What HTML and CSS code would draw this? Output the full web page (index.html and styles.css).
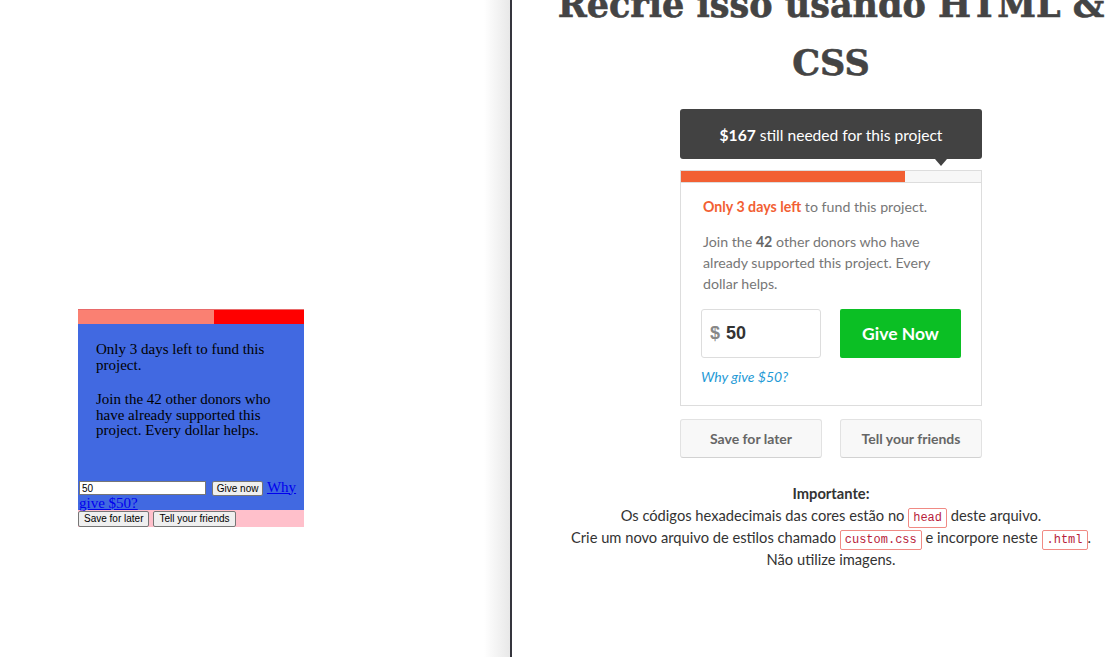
FILE: index.html
```html
<!DOCTYPE html>
<html lang="pt">
<head>
<meta charset="utf-8">
<title>Recrie isso usando HTML &amp; CSS</title>
<link rel="stylesheet" href="styles.css">
</head>
<body>
<div class="split">
  <section class="left-pane">
    <div class="widget">
      <div class="w-bar"><div class="w-fill"></div></div>
      <div class="w-body">
        <div class="w-text">
          <p>Only 3 days left to fund this project.</p>
          <p>Join the 42 other donors who have already supported this project. Every dollar helps.</p>
        </div>
        <div class="w-form"><input class="w-input" type="text" value="50"> <button class="w-btn">Give now</button> <a class="w-link" href="#">Why give $50?</a></div>
      </div>
      <div class="w-actions"><button class="w-btn">Save for later</button><button class="w-btn">Tell your friends</button></div>
    </div>
  </section>
  <div class="divider"></div>
  <section class="right-pane">
    <div class="content">
      <h1 class="title">Recrie isso usando HTML &amp; CSS</h1>
      <div class="tooltip"><span><strong>$167</strong> still needed for this project</span></div>
      <div class="card">
        <div class="progress"><div class="progress-fill"></div></div>
        <div class="card-body">
          <p class="lead"><strong>Only 3 days left</strong> to fund this project.</p>
          <p class="lead donors">Join the <strong>42</strong> other donors who have already supported this project. Every dollar helps.</p>
          <div class="give-row">
            <label class="amount"><span class="currency">$</span><input class="amount-input" type="text" value="50"></label>
            <button class="give-btn">Give Now</button>
          </div>
          <a class="why" href="#">Why give $50?</a>
        </div>
      </div>
      <div class="actions">
        <button class="action-btn">Save for later</button>
        <button class="action-btn">Tell your friends</button>
      </div>
      <div class="notes">
        <strong>Importante:</strong><br>
        Os códigos hexadecimais das cores estão no <code>head</code> deste arquivo.<br>
        Crie um novo arquivo de estilos chamado <code>custom.css</code> e incorpore neste <code>.html</code>.<br>
        Não utilize imagens.
      </div>
    </div>
  </section>
</div>
</body>
</html>
```
FILE: styles.css
```css
* { box-sizing: border-box; }
html, body { margin: 0; padding: 0; }
body { overflow: hidden; background: #fff; width: 1111px; height: 657px; }

.split { display: flex; height: 657px; }

/* ---------- left pane ---------- */
.left-pane {
  flex: none;
  width: 510px;
  padding: 309px 0 0 78px;
  background: linear-gradient(to right, #ffffff 0, #ffffff 484px, #e8e8e8 510px);
  font-family: "Liberation Serif", serif;
}
.widget { width: 226px; }
.w-bar { height: 15px; background: #ff0000; border-top: 1px solid #e86a6a; }
.w-fill { width: 60%; height: 100%; background: #fa8072; }
.w-body { background: #4169e1; padding: 0 0 0 1px; }
.w-text { padding: 18px 17px 0; }
.w-text p { margin: 0 0 19px; font-size: 15px; line-height: 15.5px; color: #000; }
.w-text p:last-child { margin-bottom: 0; }
.w-form { margin-top: 41px; font-size: 15px; line-height: 14px; }
.w-input {
  width: 127px; height: 14px; padding: 0 2px; margin: 0;
  font: 10px "Liberation Sans", sans-serif;
  border: 1px solid #767676; background: #fff; vertical-align: baseline;
}
.w-btn {
  height: 15px; padding: 0 4px; margin: 0 0 0 2px;
  font: 10px "Liberation Sans", sans-serif; color: #000;
  background: #efefef; border: 1px solid #767676; border-radius: 2px;
}
.w-link { color: #0000ee; text-decoration: underline; }
.w-actions { display: flex; gap: 4px; height: 17px; background: #ffc0cb; padding-top: 1px; }
.w-actions .w-btn { height: 16px; margin: 0; padding: 0 5px; }

.divider { flex: none; width: 2px; background: #35353d; }

/* ---------- right pane ---------- */
.right-pane { flex: 1; min-width: 0; overflow: hidden; }
.content {
  width: 600px; margin-left: 19px;
  display: flex; flex-direction: column; align-items: center;
  font-family: Lato, "Open Sans", sans-serif;
}
.title {
  margin: -24px 0 17px;
  font: bold 35px/58px "DejaVu Serif", serif;
  color: #444;
  -webkit-text-stroke: 0.6px #444;
  text-align: center;
}
.tooltip {
  position: relative;
  width: 302px; height: 50px;
  background: #424242; color: #fff;
  border-radius: 3px;
  display: flex; align-items: center; justify-content: center;
  font-size: 15.6px;
  padding-top: 1px;
}
.tooltip::after {
  content: "";
  position: absolute; top: 100%; right: 35px;
  border-left: 6px solid transparent;
  border-right: 6px solid transparent;
  border-top: 7px solid #424242;
}
.card { width: 302px; margin-top: 11px; border: 1px solid #dddddd; }
.progress { height: 12px; background: #f7f7f7; border-bottom: 1px solid #dddddd; }
.progress-fill { width: 74.7%; height: 100%; background: #f26033; }
.card-body { padding: 13px 20px 18px; }
.lead { margin: 0 0 14px; padding-left: 2px; font-size: 14.2px; line-height: 21px; color: #777; }
.lead strong { color: #f26033; }
.donors { margin-bottom: 0; }
.donors strong { color: #666; }
.give-row { display: flex; justify-content: space-between; margin-top: 15px; }
.amount {
  width: 120px; height: 49px;
  display: flex; align-items: center;
  padding-left: 8px;
  border: 1px solid #dddddd; border-radius: 3px;
  font: bold 18px "Liberation Sans", sans-serif;
}
.currency { color: #888; margin-right: 6px; }
.amount-input {
  width: 60px; padding: 0; margin: 0; border: 0; outline: none;
  font: bold 18px "Liberation Sans", sans-serif; color: #333;
}
.give-btn {
  width: 121px; height: 49px;
  background: #0bbf24; color: #fff;
  border: 0; border-radius: 2px;
  font-family: Lato, sans-serif; font-weight: bold; font-size: 17.5px;
}
.why {
  display: block; margin-top: 8px;
  font-style: italic; font-size: 14px; line-height: 21px;
  color: #1f9ad6; text-decoration: none;
}
.actions { width: 302px; display: flex; gap: 18px; margin-top: 13px; }
.action-btn {
  flex: 1; height: 39px;
  background: #f8f8f8; color: #666;
  border: 1px solid #e2e2e2; border-bottom-color: #d2d2d2; border-radius: 3px;
  font-family: Lato, sans-serif; font-weight: bold; font-size: 14px;
}
.notes {
  margin-top: 24px;
  text-align: center;
  font-size: 14.7px; line-height: 22px;
  color: #333;
}
.notes code {
  font: 12px "Liberation Mono", monospace;
  color: #b81d3c;
  background: #fff;
  border: 1px solid #f08a84; border-radius: 2px;
  padding: 2px 4px;
}
```
